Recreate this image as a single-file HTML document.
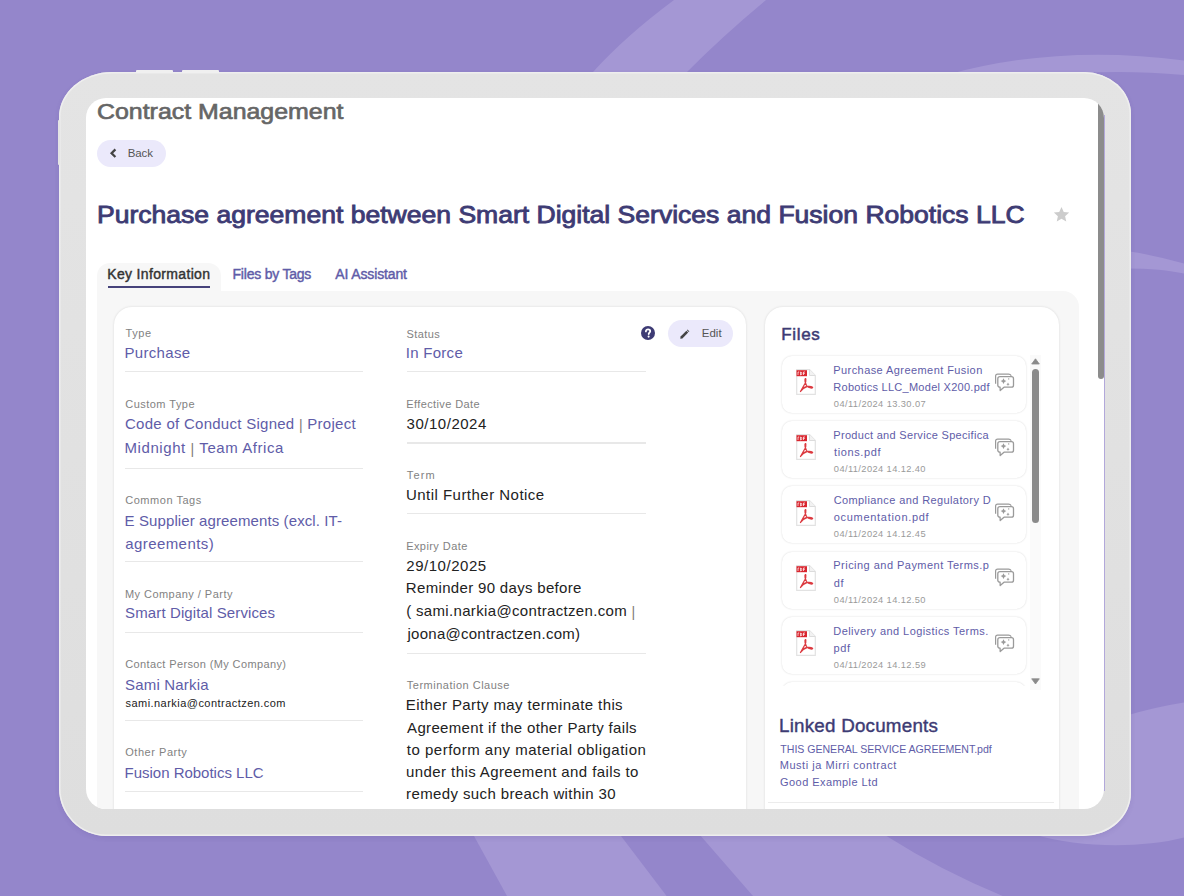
<!DOCTYPE html><html><head><meta charset="utf-8"><style>
*{margin:0;padding:0;box-sizing:border-box}
html,body{width:1184px;height:896px;overflow:hidden;background:#9486cb;font-family:"Liberation Sans",sans-serif}
.bg{position:absolute;left:0;top:0}
.abs{position:absolute}
.t{position:absolute;white-space:nowrap}
</style></head><body>
<svg class="bg" width="1184" height="896" viewBox="0 0 1184 896">
<path d="M674,0 Q625.5,36 593,72 L520,160 L640,160 L687,72 Q722.5,36 766,0 Z" fill="#a497d4"/>
<path d="M950,74 Q1060,44 1184,60.5 L1184,75 Q1130,70 1080,73 Z" fill="#a497d4"/>
<path d="M1120,250 Q1150,254 1184,263.5 L1184,273.6 Q1160,268 1120,268.5 Z" fill="#a497d4"/>
<path d="M474,836 L621,836 L666.6,896 L507,896 Z" fill="#a497d4"/>
<path d="M700.8,836 L886.5,836 Q940,870 1002.7,896 L753,896 Z" fill="#a497d4"/>
<path d="M1036,835 C1075,847 1140,849 1184,837.5 L1184,702.5 Q1155,707 1125,716 L1036,760 Z" fill="#a497d4"/>
</svg>
<div class="abs" style="left:59px;top:72px;width:1071.5px;height:763.8px;border-radius:53px 47px 48px 47px / 45px 42px 43px 48px;background:linear-gradient(#e4e4e4,#dedede);box-shadow:inset 0 0 0 1.5px #eeeeee,0 2px 5px rgba(60,40,120,0.10)"></div>
<div class="abs" style="left:136px;top:70px;width:37px;height:2.5px;background:#f0f0f0;border-radius:1px"></div>
<div class="abs" style="left:182px;top:70px;width:37px;height:2.5px;background:#f0f0f0;border-radius:1px"></div>
<div class="abs" style="left:57.5px;top:120px;width:2px;height:45px;background:#e4e4e4;border-radius:1px"></div>
<div class="abs" style="left:86.2px;top:98px;width:1018px;height:710.6px;border-radius:20px;background:#fff;overflow:hidden">
<div style="position:absolute;left:-86px;top:-98px;width:1184px;height:896px">
<div class="abs" style="left:1098px;top:98px;width:6px;height:281px;background:#8c8c8c;border-radius:0 0 3px 3px"></div>
<div class="abs" style="left:96.4px;top:140px;width:69px;height:27px;border-radius:14px;background:#ebe9fb"></div>
<svg class="abs" style="left:108px;top:147px" width="10" height="12" viewBox="0 0 10 12"><path d="M7.4,2.4 L3.6,6.2 L7.4,10" fill="none" stroke="#444" stroke-width="2.3" stroke-linecap="butt" stroke-linejoin="miter"/></svg>
<svg class="abs" style="left:1052.4px;top:206px" width="17" height="17" viewBox="0 0 24 24"><path d="M12 1.5l3.2 7 7.6.8-5.7 5.1 1.6 7.5L12 18l-6.7 3.9 1.6-7.5L1.2 9.3l7.6-.8z" fill="#cccccc"/></svg>
<div class="abs" style="left:97px;top:290.5px;width:982px;height:560px;border-radius:0 16px 0 0;background:#f7f7f7"></div>
<div class="abs" style="left:97px;top:263px;width:124px;height:40px;border-radius:13px 13px 0 0;background:#f7f7f7"></div>
<div class="abs" style="left:108px;top:285.7px;width:101.6px;height:2.2px;background:#46437b"></div>
<div class="abs" style="left:113.4px;top:306.6px;width:632.8px;height:560px;border-radius:18px;background:#fff;box-shadow:0 0 2.5px rgba(0,0,0,0.13)"></div>
<div class="abs" style="left:125.3px;top:370.8px;width:238px;height:1.2px;background:#e8e8e8"></div>
<div class="abs" style="left:125.3px;top:467.5px;width:238px;height:1.2px;background:#e8e8e8"></div>
<div class="abs" style="left:125.3px;top:560.9px;width:238px;height:1.2px;background:#e8e8e8"></div>
<div class="abs" style="left:125.3px;top:632.0px;width:238px;height:1.2px;background:#e8e8e8"></div>
<div class="abs" style="left:125.3px;top:719.8px;width:238px;height:1.2px;background:#e8e8e8"></div>
<div class="abs" style="left:125.3px;top:790.5px;width:238px;height:1.2px;background:#e8e8e8"></div>
<div class="abs" style="left:406.7px;top:370.9px;width:239px;height:1.2px;background:#e8e8e8"></div>
<div class="abs" style="left:406.7px;top:442.4px;width:239px;height:1.2px;background:#e8e8e8"></div>
<div class="abs" style="left:406.7px;top:512.5px;width:239px;height:1.2px;background:#e8e8e8"></div>
<div class="abs" style="left:406.7px;top:652.9px;width:239px;height:1.2px;background:#e8e8e8"></div>
<svg class="abs" style="left:640.5px;top:326px" width="14" height="14" viewBox="0 0 14 14"><circle cx="7" cy="7" r="7" fill="#3d3b74"/><path d="M4.9,5.4 C4.9,4.1 5.8,3.3 7.1,3.3 C8.4,3.3 9.2,4.1 9.2,5.2 C9.2,6.5 7.7,6.7 7.7,8" fill="none" stroke="#fff" stroke-width="1.8" stroke-linecap="round"/><circle cx="7.6" cy="10.6" r="1.05" fill="#fff"/></svg>
<div class="abs" style="left:668px;top:320px;width:65px;height:27px;border-radius:14px;background:#ebe9fb"></div>
<svg class="abs" style="left:679px;top:328.5px" width="11" height="11" viewBox="0 0 11 11"><path d="M1.3,9.7 L1.6,7.6 L7.4,1.8 L9.2,3.6 L3.4,9.4 Z" fill="#444"/><path d="M7.9,1.3 L8.6,0.6 L10.4,2.4 L9.7,3.1 Z" fill="#444"/></svg>
<div id="tedit" class="t" style="left:701.6px;top:327.0px;font-size:11.5px;line-height:13.8px;color:#555">Edit</div>
<div class="abs" style="left:764.6px;top:306.6px;width:294px;height:560px;border-radius:18px;background:#fff;box-shadow:0 0 2.5px rgba(0,0,0,0.13)"></div>
<div class="abs" style="left:1030px;top:355px;width:11px;height:335px;background:#fafafa"></div>
<div class="abs" style="left:1032px;top:369px;width:7.2px;height:153.5px;border-radius:3.6px;background:#8a8a8a"></div>
<svg class="abs" style="left:1031px;top:358px" width="9" height="7" viewBox="0 0 9 7"><path d="M4.5,0.8 L8.3,6 L0.7,6 Z" fill="#8a8a8a" stroke="#8a8a8a" stroke-width="0.8" stroke-linejoin="round"/></svg>
<svg class="abs" style="left:1031px;top:677.5px" width="9" height="7" viewBox="0 0 9 7"><path d="M0.7,0.8 L8.3,0.8 L4.5,6 Z" fill="#8a8a8a" stroke="#8a8a8a" stroke-width="0.8" stroke-linejoin="round"/></svg>
<div class="abs" style="left:770px;top:350px;width:260px;height:336px;overflow:hidden"><div style="position:absolute;left:-770px;top:-350px;width:1184px;height:896px">
<div class="abs" style="left:782.3px;top:355.8px;width:243.2px;height:57px;border-radius:10px;background:#fff;box-shadow:0 0 2px rgba(0,0,0,0.16)"></div>
<svg class="abs" style="left:796.0px;top:369.0px" width="20" height="26" viewBox="0 0 20 26">
<path d="M0.7,0.7 L13.5,0.7 L19.3,6.5 L19.3,25.3 L0.7,25.3 Z" fill="#fff" stroke="#e2e2e2" stroke-width="1.2"/>
<path d="M13.5,0.7 L13.5,6.5 L19.3,6.5" fill="#f2f2f2" stroke="#dcdcdc" stroke-width="1"/>
<rect x="0.5" y="1.2" width="10.5" height="6" fill="#d9262f"/>
<path d="M2,6 L2,3 L3.2,3 M4.5,6 L4.5,3 L5.8,3.6 L5.8,5.4 L4.5,6 M7.5,6 L7.5,3 L9,3 M7.5,4.5 L8.8,4.5" fill="none" stroke="#fff" stroke-width="0.7"/>
<path d="M4.5,22.5 Q6.5,19 9,14.5 Q10,12.5 9.8,10 Q9.5,9 9,10.5 Q8.6,13 10.5,16.5 Q12,18.8 15.5,19 Q17,19 16.5,18.2 Q15,17 11,17.5 Q7,18.5 4.5,22.5 Z" fill="none" stroke="#dc3a40" stroke-width="1.3" stroke-linejoin="round"/>
</svg>
<svg class="abs" style="left:992.5px;top:372.5px" width="22" height="20" viewBox="0 0 22 20">
<path d="M2.6,10.8 L2.6,3.2 Q2.6,1.2 4.6,1.2 L15.6,1.2 Q17.3,1.2 18.3,2.8" fill="none" stroke="#9a9a9a" stroke-width="1.2"/>
<path d="M7,3.7 L18.5,3.7 Q20.5,3.7 20.5,5.7 L20.5,12.2 Q20.5,14.2 18.5,14.2 L11,14.2 L7.2,17.6 L7.1,14.2 Q4.8,14 4.8,12.2 L4.8,5.7 Q4.8,3.7 7,3.7 Z" fill="#fff" stroke="#9a9a9a" stroke-width="1.3" stroke-linejoin="round"/>
<path d="M10.5,5.2 Q11.1,7.5 13.4,8.1 Q11.1,8.7 10.5,11 Q9.9,8.7 7.6,8.1 Q9.9,7.5 10.5,5.2 Z" fill="#9a9a9a"/>
<path d="M15,9.6 Q15.4,11 16.6,11.3 Q15.4,11.6 15,13 Q14.6,11.6 13.4,11.3 Q14.6,11 15,9.6 Z" fill="#9a9a9a"/>
<circle cx="15.7" cy="5.9" r="0.7" fill="#9a9a9a"/>
</svg>
<div class="abs" style="left:782.3px;top:421.0px;width:243.2px;height:57px;border-radius:10px;background:#fff;box-shadow:0 0 2px rgba(0,0,0,0.16)"></div>
<svg class="abs" style="left:796.0px;top:434.2px" width="20" height="26" viewBox="0 0 20 26">
<path d="M0.7,0.7 L13.5,0.7 L19.3,6.5 L19.3,25.3 L0.7,25.3 Z" fill="#fff" stroke="#e2e2e2" stroke-width="1.2"/>
<path d="M13.5,0.7 L13.5,6.5 L19.3,6.5" fill="#f2f2f2" stroke="#dcdcdc" stroke-width="1"/>
<rect x="0.5" y="1.2" width="10.5" height="6" fill="#d9262f"/>
<path d="M2,6 L2,3 L3.2,3 M4.5,6 L4.5,3 L5.8,3.6 L5.8,5.4 L4.5,6 M7.5,6 L7.5,3 L9,3 M7.5,4.5 L8.8,4.5" fill="none" stroke="#fff" stroke-width="0.7"/>
<path d="M4.5,22.5 Q6.5,19 9,14.5 Q10,12.5 9.8,10 Q9.5,9 9,10.5 Q8.6,13 10.5,16.5 Q12,18.8 15.5,19 Q17,19 16.5,18.2 Q15,17 11,17.5 Q7,18.5 4.5,22.5 Z" fill="none" stroke="#dc3a40" stroke-width="1.3" stroke-linejoin="round"/>
</svg>
<svg class="abs" style="left:992.5px;top:437.7px" width="22" height="20" viewBox="0 0 22 20">
<path d="M2.6,10.8 L2.6,3.2 Q2.6,1.2 4.6,1.2 L15.6,1.2 Q17.3,1.2 18.3,2.8" fill="none" stroke="#9a9a9a" stroke-width="1.2"/>
<path d="M7,3.7 L18.5,3.7 Q20.5,3.7 20.5,5.7 L20.5,12.2 Q20.5,14.2 18.5,14.2 L11,14.2 L7.2,17.6 L7.1,14.2 Q4.8,14 4.8,12.2 L4.8,5.7 Q4.8,3.7 7,3.7 Z" fill="#fff" stroke="#9a9a9a" stroke-width="1.3" stroke-linejoin="round"/>
<path d="M10.5,5.2 Q11.1,7.5 13.4,8.1 Q11.1,8.7 10.5,11 Q9.9,8.7 7.6,8.1 Q9.9,7.5 10.5,5.2 Z" fill="#9a9a9a"/>
<path d="M15,9.6 Q15.4,11 16.6,11.3 Q15.4,11.6 15,13 Q14.6,11.6 13.4,11.3 Q14.6,11 15,9.6 Z" fill="#9a9a9a"/>
<circle cx="15.7" cy="5.9" r="0.7" fill="#9a9a9a"/>
</svg>
<div class="abs" style="left:782.3px;top:486.3px;width:243.2px;height:57px;border-radius:10px;background:#fff;box-shadow:0 0 2px rgba(0,0,0,0.16)"></div>
<svg class="abs" style="left:796.0px;top:499.5px" width="20" height="26" viewBox="0 0 20 26">
<path d="M0.7,0.7 L13.5,0.7 L19.3,6.5 L19.3,25.3 L0.7,25.3 Z" fill="#fff" stroke="#e2e2e2" stroke-width="1.2"/>
<path d="M13.5,0.7 L13.5,6.5 L19.3,6.5" fill="#f2f2f2" stroke="#dcdcdc" stroke-width="1"/>
<rect x="0.5" y="1.2" width="10.5" height="6" fill="#d9262f"/>
<path d="M2,6 L2,3 L3.2,3 M4.5,6 L4.5,3 L5.8,3.6 L5.8,5.4 L4.5,6 M7.5,6 L7.5,3 L9,3 M7.5,4.5 L8.8,4.5" fill="none" stroke="#fff" stroke-width="0.7"/>
<path d="M4.5,22.5 Q6.5,19 9,14.5 Q10,12.5 9.8,10 Q9.5,9 9,10.5 Q8.6,13 10.5,16.5 Q12,18.8 15.5,19 Q17,19 16.5,18.2 Q15,17 11,17.5 Q7,18.5 4.5,22.5 Z" fill="none" stroke="#dc3a40" stroke-width="1.3" stroke-linejoin="round"/>
</svg>
<svg class="abs" style="left:992.5px;top:503.0px" width="22" height="20" viewBox="0 0 22 20">
<path d="M2.6,10.8 L2.6,3.2 Q2.6,1.2 4.6,1.2 L15.6,1.2 Q17.3,1.2 18.3,2.8" fill="none" stroke="#9a9a9a" stroke-width="1.2"/>
<path d="M7,3.7 L18.5,3.7 Q20.5,3.7 20.5,5.7 L20.5,12.2 Q20.5,14.2 18.5,14.2 L11,14.2 L7.2,17.6 L7.1,14.2 Q4.8,14 4.8,12.2 L4.8,5.7 Q4.8,3.7 7,3.7 Z" fill="#fff" stroke="#9a9a9a" stroke-width="1.3" stroke-linejoin="round"/>
<path d="M10.5,5.2 Q11.1,7.5 13.4,8.1 Q11.1,8.7 10.5,11 Q9.9,8.7 7.6,8.1 Q9.9,7.5 10.5,5.2 Z" fill="#9a9a9a"/>
<path d="M15,9.6 Q15.4,11 16.6,11.3 Q15.4,11.6 15,13 Q14.6,11.6 13.4,11.3 Q14.6,11 15,9.6 Z" fill="#9a9a9a"/>
<circle cx="15.7" cy="5.9" r="0.7" fill="#9a9a9a"/>
</svg>
<div class="abs" style="left:782.3px;top:551.5px;width:243.2px;height:57px;border-radius:10px;background:#fff;box-shadow:0 0 2px rgba(0,0,0,0.16)"></div>
<svg class="abs" style="left:796.0px;top:564.7px" width="20" height="26" viewBox="0 0 20 26">
<path d="M0.7,0.7 L13.5,0.7 L19.3,6.5 L19.3,25.3 L0.7,25.3 Z" fill="#fff" stroke="#e2e2e2" stroke-width="1.2"/>
<path d="M13.5,0.7 L13.5,6.5 L19.3,6.5" fill="#f2f2f2" stroke="#dcdcdc" stroke-width="1"/>
<rect x="0.5" y="1.2" width="10.5" height="6" fill="#d9262f"/>
<path d="M2,6 L2,3 L3.2,3 M4.5,6 L4.5,3 L5.8,3.6 L5.8,5.4 L4.5,6 M7.5,6 L7.5,3 L9,3 M7.5,4.5 L8.8,4.5" fill="none" stroke="#fff" stroke-width="0.7"/>
<path d="M4.5,22.5 Q6.5,19 9,14.5 Q10,12.5 9.8,10 Q9.5,9 9,10.5 Q8.6,13 10.5,16.5 Q12,18.8 15.5,19 Q17,19 16.5,18.2 Q15,17 11,17.5 Q7,18.5 4.5,22.5 Z" fill="none" stroke="#dc3a40" stroke-width="1.3" stroke-linejoin="round"/>
</svg>
<svg class="abs" style="left:992.5px;top:568.2px" width="22" height="20" viewBox="0 0 22 20">
<path d="M2.6,10.8 L2.6,3.2 Q2.6,1.2 4.6,1.2 L15.6,1.2 Q17.3,1.2 18.3,2.8" fill="none" stroke="#9a9a9a" stroke-width="1.2"/>
<path d="M7,3.7 L18.5,3.7 Q20.5,3.7 20.5,5.7 L20.5,12.2 Q20.5,14.2 18.5,14.2 L11,14.2 L7.2,17.6 L7.1,14.2 Q4.8,14 4.8,12.2 L4.8,5.7 Q4.8,3.7 7,3.7 Z" fill="#fff" stroke="#9a9a9a" stroke-width="1.3" stroke-linejoin="round"/>
<path d="M10.5,5.2 Q11.1,7.5 13.4,8.1 Q11.1,8.7 10.5,11 Q9.9,8.7 7.6,8.1 Q9.9,7.5 10.5,5.2 Z" fill="#9a9a9a"/>
<path d="M15,9.6 Q15.4,11 16.6,11.3 Q15.4,11.6 15,13 Q14.6,11.6 13.4,11.3 Q14.6,11 15,9.6 Z" fill="#9a9a9a"/>
<circle cx="15.7" cy="5.9" r="0.7" fill="#9a9a9a"/>
</svg>
<div class="abs" style="left:782.3px;top:616.8px;width:243.2px;height:57px;border-radius:10px;background:#fff;box-shadow:0 0 2px rgba(0,0,0,0.16)"></div>
<svg class="abs" style="left:796.0px;top:630.0px" width="20" height="26" viewBox="0 0 20 26">
<path d="M0.7,0.7 L13.5,0.7 L19.3,6.5 L19.3,25.3 L0.7,25.3 Z" fill="#fff" stroke="#e2e2e2" stroke-width="1.2"/>
<path d="M13.5,0.7 L13.5,6.5 L19.3,6.5" fill="#f2f2f2" stroke="#dcdcdc" stroke-width="1"/>
<rect x="0.5" y="1.2" width="10.5" height="6" fill="#d9262f"/>
<path d="M2,6 L2,3 L3.2,3 M4.5,6 L4.5,3 L5.8,3.6 L5.8,5.4 L4.5,6 M7.5,6 L7.5,3 L9,3 M7.5,4.5 L8.8,4.5" fill="none" stroke="#fff" stroke-width="0.7"/>
<path d="M4.5,22.5 Q6.5,19 9,14.5 Q10,12.5 9.8,10 Q9.5,9 9,10.5 Q8.6,13 10.5,16.5 Q12,18.8 15.5,19 Q17,19 16.5,18.2 Q15,17 11,17.5 Q7,18.5 4.5,22.5 Z" fill="none" stroke="#dc3a40" stroke-width="1.3" stroke-linejoin="round"/>
</svg>
<svg class="abs" style="left:992.5px;top:633.5px" width="22" height="20" viewBox="0 0 22 20">
<path d="M2.6,10.8 L2.6,3.2 Q2.6,1.2 4.6,1.2 L15.6,1.2 Q17.3,1.2 18.3,2.8" fill="none" stroke="#9a9a9a" stroke-width="1.2"/>
<path d="M7,3.7 L18.5,3.7 Q20.5,3.7 20.5,5.7 L20.5,12.2 Q20.5,14.2 18.5,14.2 L11,14.2 L7.2,17.6 L7.1,14.2 Q4.8,14 4.8,12.2 L4.8,5.7 Q4.8,3.7 7,3.7 Z" fill="#fff" stroke="#9a9a9a" stroke-width="1.3" stroke-linejoin="round"/>
<path d="M10.5,5.2 Q11.1,7.5 13.4,8.1 Q11.1,8.7 10.5,11 Q9.9,8.7 7.6,8.1 Q9.9,7.5 10.5,5.2 Z" fill="#9a9a9a"/>
<path d="M15,9.6 Q15.4,11 16.6,11.3 Q15.4,11.6 15,13 Q14.6,11.6 13.4,11.3 Q14.6,11 15,9.6 Z" fill="#9a9a9a"/>
<circle cx="15.7" cy="5.9" r="0.7" fill="#9a9a9a"/>
</svg>
<div class="abs" style="left:782.3px;top:682.0px;width:243.2px;height:57px;border-radius:10px;background:#fff;box-shadow:0 0 2px rgba(0,0,0,0.16)"></div>
<div id="t41" class="t" style="left:833.10px;top:363.69px;font-size:11px;line-height:13.2px;font-weight:400;color:#605ca8;letter-spacing:0.425px;">Purchase Agreement Fusion</div>
<div id="t42" class="t" style="left:833.10px;top:380.89px;font-size:11px;line-height:13.2px;font-weight:400;color:#605ca8;letter-spacing:0.269px;">Robotics LLC_Model X200.pdf</div>
<div id="t43" class="t" style="left:833.64px;top:398.90px;font-size:9.3px;line-height:11.16px;font-weight:400;color:#9a9a9a;letter-spacing:0.401px;">04/11/2024 13.30.07</div>
<div id="t44" class="t" style="left:833.10px;top:428.93px;font-size:11px;line-height:13.2px;font-weight:400;color:#605ca8;letter-spacing:0.306px;">Product and Service Specifica</div>
<div id="t45" class="t" style="left:833.83px;top:446.13px;font-size:11px;line-height:13.2px;font-weight:400;color:#605ca8;letter-spacing:0.621px;">tions.pdf</div>
<div id="t46" class="t" style="left:833.64px;top:464.14px;font-size:9.3px;line-height:11.16px;font-weight:400;color:#9a9a9a;letter-spacing:0.395px;">04/11/2024 14.12.40</div>
<div id="t47" class="t" style="left:833.44px;top:494.17px;font-size:11px;line-height:13.2px;font-weight:400;color:#605ca8;letter-spacing:0.398px;">Compliance and Regulatory D</div>
<div id="t48" class="t" style="left:833.54px;top:511.37px;font-size:11px;line-height:13.2px;font-weight:400;color:#605ca8;letter-spacing:0.704px;">ocumentation.pdf</div>
<div id="t49" class="t" style="left:833.64px;top:529.38px;font-size:9.3px;line-height:11.16px;font-weight:400;color:#9a9a9a;letter-spacing:0.397px;">04/11/2024 14.12.45</div>
<div id="t50" class="t" style="left:833.10px;top:559.41px;font-size:11px;line-height:13.2px;font-weight:400;color:#605ca8;letter-spacing:0.469px;">Pricing and Payment Terms.p</div>
<div id="t51" class="t" style="left:833.54px;top:576.61px;font-size:11px;line-height:13.2px;font-weight:400;color:#605ca8;letter-spacing:0.748px;">df</div>
<div id="t52" class="t" style="left:833.64px;top:594.62px;font-size:9.3px;line-height:11.16px;font-weight:400;color:#9a9a9a;letter-spacing:0.395px;">04/11/2024 14.12.50</div>
<div id="t53" class="t" style="left:833.10px;top:624.65px;font-size:11px;line-height:13.2px;font-weight:400;color:#605ca8;letter-spacing:0.432px;">Delivery and Logistics Terms.</div>
<div id="t54" class="t" style="left:833.29px;top:641.85px;font-size:11px;line-height:13.2px;font-weight:400;color:#605ca8;letter-spacing:0.626px;">pdf</div>
<div id="t55" class="t" style="left:833.64px;top:659.86px;font-size:9.3px;line-height:11.16px;font-weight:400;color:#9a9a9a;letter-spacing:0.400px;">04/11/2024 14.12.59</div>
</div></div>
<div class="abs" style="left:768px;top:801.7px;width:286px;height:1.3px;background:#ececec"></div>
<div id="t0" class="t" style="left:96.64px;top:97.80px;font-size:22.5px;line-height:27.0px;font-weight:400;color:#666666;letter-spacing:0.000px;transform:scaleX(1.1071);transform-origin:0 0;-webkit-text-stroke:0.67px #666666;">Contract Management</div>
<div id="t1" class="t" style="left:127.56px;top:147.32px;font-size:11.5px;line-height:13.8px;font-weight:400;color:#555555;letter-spacing:-0.113px;">Back</div>
<div id="t2" class="t" style="left:96.52px;top:201.36px;font-size:23.5px;line-height:28.2px;font-weight:400;color:#3d3b74;letter-spacing:0.000px;transform:scaleX(1.1291);transform-origin:0 0;-webkit-text-stroke:0.85px #3d3b74;">Purchase agreement between Smart Digital Services and Fusion Robotics LLC</div>
<div id="t3" class="t" style="left:107.05px;top:266.35px;font-size:14px;line-height:16.8px;font-weight:400;color:#333333;letter-spacing:0.336px;-webkit-text-stroke:0.42px #333333;">Key Information</div>
<div id="t4" class="t" style="left:232.35px;top:266.15px;font-size:14px;line-height:16.8px;font-weight:400;color:#605ca8;letter-spacing:-0.220px;-webkit-text-stroke:0.42px #605ca8;">Files by Tags</div>
<div id="t5" class="t" style="left:335.17px;top:266.15px;font-size:14px;line-height:16.8px;font-weight:400;color:#605ca8;letter-spacing:-0.135px;-webkit-text-stroke:0.42px #605ca8;">AI Assistant</div>
<div id="t6" class="t" style="left:125.35px;top:327.49px;font-size:11px;line-height:13.2px;font-weight:400;color:#828282;letter-spacing:0.563px;">Type</div>
<div id="t7" class="t" style="left:124.37px;top:343.70px;font-size:15px;line-height:18.0px;font-weight:400;color:#605ca8;letter-spacing:0.304px;">Purchase</div>
<div id="t8" class="t" style="left:125.04px;top:397.79px;font-size:11px;line-height:13.2px;font-weight:400;color:#828282;letter-spacing:0.475px;">Custom Type</div>
<div id="t9" class="t" style="left:124.84px;top:415.20px;font-size:15px;line-height:18.0px;font-weight:400;color:#605ca8;letter-spacing:0.274px;">Code of Conduct Signed <span style="color:#807a78;font-size:14px;vertical-align:-1px">|</span> Project</div>
<div id="t10" class="t" style="left:124.37px;top:438.60px;font-size:15px;line-height:18.0px;font-weight:400;color:#605ca8;letter-spacing:0.577px;">Midnight <span style="color:#807a78;font-size:14px;vertical-align:-1px">|</span> Team Africa</div>
<div id="t11" class="t" style="left:125.04px;top:493.99px;font-size:11px;line-height:13.2px;font-weight:400;color:#828282;letter-spacing:0.534px;">Common Tags</div>
<div id="t12" class="t" style="left:124.37px;top:511.90px;font-size:15px;line-height:18.0px;font-weight:400;color:#605ca8;letter-spacing:0.105px;">E Supplier agreements (excl. IT-</div>
<div id="t13" class="t" style="left:124.96px;top:534.80px;font-size:15px;line-height:18.0px;font-weight:400;color:#605ca8;letter-spacing:0.436px;">agreements)</div>
<div id="t14" class="t" style="left:124.70px;top:587.79px;font-size:11px;line-height:13.2px;font-weight:400;color:#828282;letter-spacing:0.464px;">My Company / Party</div>
<div id="t15" class="t" style="left:124.92px;top:604.40px;font-size:15px;line-height:18.0px;font-weight:400;color:#605ca8;letter-spacing:0.114px;">Smart Digital Services</div>
<div id="t16" class="t" style="left:125.04px;top:658.39px;font-size:11px;line-height:13.2px;font-weight:400;color:#828282;letter-spacing:0.375px;">Contact Person (My Company)</div>
<div id="t17" class="t" style="left:124.92px;top:675.50px;font-size:15px;line-height:18.0px;font-weight:400;color:#605ca8;letter-spacing:0.169px;">Sami Narkia</div>
<div id="t18" class="t" style="left:125.29px;top:697.39px;font-size:11px;line-height:13.2px;font-weight:400;color:#222222;letter-spacing:0.459px;">sami.narkia@contractzen.com</div>
<div id="t19" class="t" style="left:125.08px;top:746.19px;font-size:11px;line-height:13.2px;font-weight:400;color:#828282;letter-spacing:0.530px;">Other Party</div>
<div id="t20" class="t" style="left:124.37px;top:763.80px;font-size:15px;line-height:18.0px;font-weight:400;color:#605ca8;letter-spacing:-0.013px;">Fusion Robotics LLC</div>
<div id="t21" class="t" style="left:406.40px;top:327.59px;font-size:11px;line-height:13.2px;font-weight:400;color:#828282;letter-spacing:0.422px;">Status</div>
<div id="t22" class="t" style="left:405.52px;top:343.80px;font-size:15px;line-height:18.0px;font-weight:400;color:#605ca8;letter-spacing:0.290px;">In Force</div>
<div id="t23" class="t" style="left:406.00px;top:397.79px;font-size:11px;line-height:13.2px;font-weight:400;color:#828282;letter-spacing:0.401px;">Effective Date</div>
<div id="t24" class="t" style="left:406.33px;top:414.70px;font-size:15px;line-height:18.0px;font-weight:400;color:#222222;letter-spacing:0.526px;">30/10/2024</div>
<div id="t25" class="t" style="left:406.65px;top:468.59px;font-size:11px;line-height:13.2px;font-weight:400;color:#828282;letter-spacing:1.109px;">Term</div>
<div id="t26" class="t" style="left:405.74px;top:485.80px;font-size:15px;line-height:18.0px;font-weight:400;color:#222222;letter-spacing:0.475px;">Until Further Notice</div>
<div id="t27" class="t" style="left:406.00px;top:539.89px;font-size:11px;line-height:13.2px;font-weight:400;color:#828282;letter-spacing:0.424px;">Expiry Date</div>
<div id="t28" class="t" style="left:406.15px;top:557.00px;font-size:15px;line-height:18.0px;font-weight:400;color:#222222;letter-spacing:0.523px;">29/10/2025</div>
<div id="t29" class="t" style="left:405.67px;top:579.20px;font-size:15px;line-height:18.0px;font-weight:400;color:#222222;letter-spacing:0.326px;">Reminder 90 days before</div>
<div id="t30" class="t" style="left:405.97px;top:601.70px;font-size:15px;line-height:18.0px;font-weight:400;color:#222222;letter-spacing:0.336px;">( sami.narkia@contractzen.com <span style="color:#807a78;font-size:14px;vertical-align:-1px">|</span></div>
<div id="t31" class="t" style="left:407.27px;top:624.50px;font-size:15px;line-height:18.0px;font-weight:400;color:#222222;letter-spacing:0.266px;">joona@contractzen.com)</div>
<div id="t32" class="t" style="left:406.65px;top:678.99px;font-size:11px;line-height:13.2px;font-weight:400;color:#828282;letter-spacing:0.499px;">Termination Clause</div>
<div id="t33" class="t" style="left:405.67px;top:696.40px;font-size:15px;line-height:18.0px;font-weight:400;color:#222222;letter-spacing:0.390px;">Either Party may terminate this</div>
<div id="t34" class="t" style="left:406.87px;top:718.50px;font-size:15px;line-height:18.0px;font-weight:400;color:#222222;letter-spacing:0.337px;">Agreement if the other Party fails</div>
<div id="t35" class="t" style="left:406.67px;top:740.60px;font-size:15px;line-height:18.0px;font-weight:400;color:#222222;letter-spacing:0.497px;">to perform any material obligation</div>
<div id="t36" class="t" style="left:405.93px;top:762.70px;font-size:15px;line-height:18.0px;font-weight:400;color:#222222;letter-spacing:0.405px;">under this Agreement and fails to</div>
<div id="t37" class="t" style="left:405.90px;top:784.80px;font-size:15px;line-height:18.0px;font-weight:400;color:#222222;letter-spacing:0.382px;">remedy such breach within 30</div>
<div id="t38" class="t" style="left:406.27px;top:806.90px;font-size:15px;line-height:18.0px;font-weight:400;color:#222222;letter-spacing:0.379px;">days of notice.</div>
<div id="t39" class="t" style="left:406.73px;top:829.00px;font-size:15px;line-height:18.0px;font-weight:400;color:#222222;letter-spacing:0.402px;">x</div>
<div id="t40" class="t" style="left:781.11px;top:324.91px;font-size:17px;line-height:20.4px;font-weight:400;color:#3d3b74;letter-spacing:0.654px;-webkit-text-stroke:0.51px #3d3b74;">Files</div>
<div id="t56" class="t" style="left:778.86px;top:714.51px;font-size:18.8px;line-height:22.56px;font-weight:400;color:#3d3b74;letter-spacing:0.218px;-webkit-text-stroke:0.41px #3d3b74;">Linked Documents</div>
<div id="t57" class="t" style="left:780.16px;top:742.57px;font-size:10.6px;line-height:12.72px;font-weight:400;color:#605ca8;letter-spacing:-0.033px;">THIS GENERAL SERVICE AGREEMENT.pdf</div>
<div id="t58" class="t" style="left:779.50px;top:759.49px;font-size:11px;line-height:13.2px;font-weight:400;color:#605ca8;letter-spacing:0.548px;">Musti ja Mirri contract</div>
<div id="t59" class="t" style="left:779.85px;top:775.59px;font-size:11px;line-height:13.2px;font-weight:400;color:#605ca8;letter-spacing:0.437px;">Good Example Ltd</div>
</div></div>
<div class="abs" style="left:1104.2px;top:115px;width:0.9px;height:676px;background:#b2a8da"></div>
</body></html>
